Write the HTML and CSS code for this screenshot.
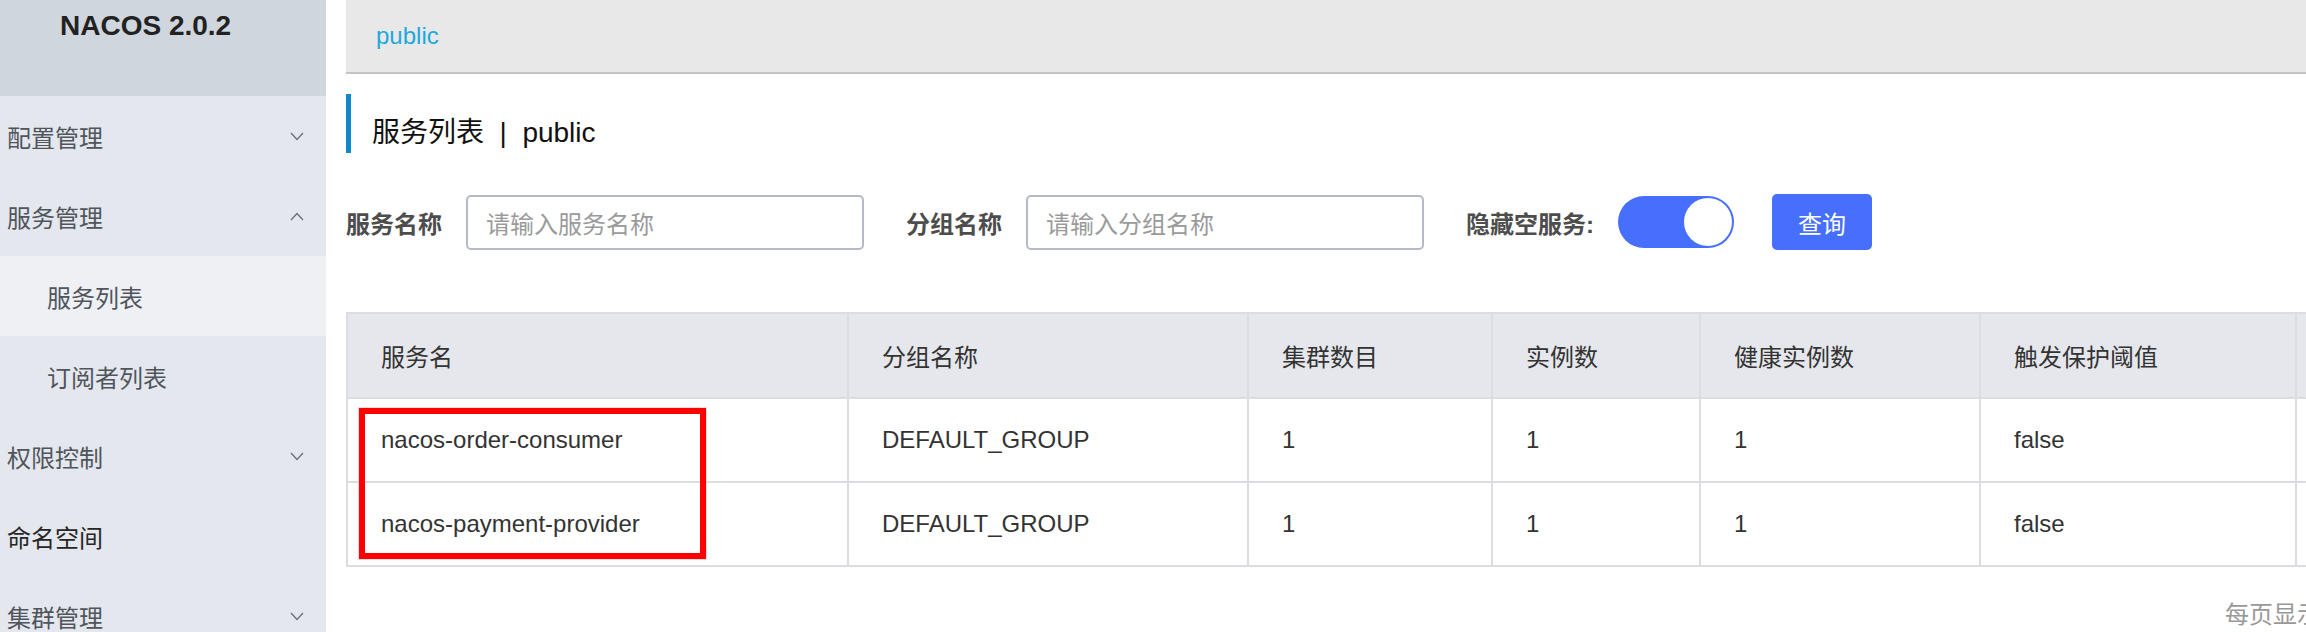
FILE: index.html
```html
<!DOCTYPE html>
<html lang="zh-CN">
<head>
<meta charset="utf-8">
<title>NACOS</title>
<link rel="stylesheet" href="styles.css">
</head>
<body>
<aside class="sidebar">
  <div class="brand">NACOS 2.0.2</div>
  <ul class="menu">
    <li class="menu-item"><span>配置管理</span><svg class="chev" width="14" height="9" viewBox="0 0 14 9"><polyline points="1,1 7,7.5 13,1" fill="none" stroke="#6b6f78" stroke-width="1.3"/></svg></li>
    <li class="menu-item"><span>服务管理</span><svg class="chev" width="14" height="9" viewBox="0 0 14 9"><polyline points="1,8 7,1.5 13,8" fill="none" stroke="#6b6f78" stroke-width="1.3"/></svg></li>
    <li class="menu-item sub active"><span>服务列表</span></li>
    <li class="menu-item sub"><span>订阅者列表</span></li>
    <li class="menu-item"><span>权限控制</span><svg class="chev" width="14" height="9" viewBox="0 0 14 9"><polyline points="1,1 7,7.5 13,1" fill="none" stroke="#6b6f78" stroke-width="1.3"/></svg></li>
    <li class="menu-item dark"><span>命名空间</span></li>
    <li class="menu-item"><span>集群管理</span><svg class="chev" width="14" height="9" viewBox="0 0 14 9"><polyline points="1,1 7,7.5 13,1" fill="none" stroke="#6b6f78" stroke-width="1.3"/></svg></li>
  </ul>
</aside>
<main class="main">
  <div class="topbar"><span class="ns-link">public</span></div>
  <h1 class="page-title">服务列表&nbsp;&nbsp;|&nbsp;&nbsp;public</h1>
  <form class="filters">
    <div class="field">
      <label class="field-label">服务名称</label>
      <div class="input"><span class="placeholder">请输入服务名称</span></div>
    </div>
    <div class="field">
      <label class="field-label">分组名称</label>
      <div class="input"><span class="placeholder">请输入分组名称</span></div>
    </div>
    <div class="field">
      <label class="field-label">隐藏空服务:</label>
      <div class="switch"><span class="knob"></span></div>
    </div>
    <button type="button" class="btn-primary">查询</button>
  </form>
  <div class="table-wrap">
    <table class="grid">
      <colgroup>
        <col class="c1"><col class="c2"><col class="c3"><col class="c4"><col class="c5"><col class="c6"><col class="c7">
      </colgroup>
      <thead>
        <tr><th>服务名</th><th>分组名称</th><th>集群数目</th><th>实例数</th><th>健康实例数</th><th>触发保护阈值</th><th></th></tr>
      </thead>
      <tbody>
        <tr><td>nacos-order-consumer</td><td>DEFAULT_GROUP</td><td>1</td><td>1</td><td>1</td><td>false</td><td></td></tr>
        <tr><td>nacos-payment-provider</td><td>DEFAULT_GROUP</td><td>1</td><td>1</td><td>1</td><td>false</td><td></td></tr>
      </tbody>
    </table>
    <div class="highlight-box"></div>
  </div>
  <div class="pagination"><span class="page-size">每页显示</span></div>
</main>
</body>
</html>
```

FILE: styles.css
```css
* { box-sizing: border-box; }
html, body {
  margin: 0;
  padding: 0;
  width: 2306px;
  height: 632px;
  overflow: hidden;
  background: #ffffff;
  font-family: "Liberation Sans", "Noto Sans CJK SC", sans-serif;
}
body {
  display: flex;
  align-items: stretch;
}

/* Sidebar */
.sidebar {
  width: 326px;
  flex: 0 0 326px;
  height: 632px;
  background: #e4e7ee;
}
.brand {
  height: 96px;
  background: #cfd6dd;
  padding-left: 60px;
  line-height: 52px;
  font-size: 28px;
  font-weight: bold;
  color: #222;
}
.menu {
  list-style: none;
  margin: 0;
  padding: 0;
}
.menu-item {
  height: 80px;
  display: flex;
  align-items: center;
  justify-content: space-between;
  padding: 0 22px 0 7px;
  font-size: 24px;
  color: #50555c;
}
.menu-item.sub { padding-left: 47px; }
.menu-item.active { background: #eef0f4; }
.menu-item.dark { color: #262626; }
.chev { display: block; }

/* Main */
.main {
  flex: 1 1 auto;
  min-width: 0;
  margin-left: 20px;
}
.topbar {
  height: 74px;
  background: #e8e8e8;
  border-bottom: 2px solid #c4c4c4;
  padding-left: 30px;
  line-height: 72px;
  font-size: 24px;
}
.ns-link { color: #1fa8dc; }

.page-title {
  margin: 20px 0 0 0;
  height: 59px;
  border-left: 5px solid #0f88cc;
  padding: 18px 0 0 21px;
  line-height: 41px;
  font-size: 28px;
  font-weight: normal;
  color: #111;
}

.filters {
  margin: 41px 0 0 0;
  display: flex;
  align-items: center;
  height: 56px;
}
.field {
  display: flex;
  align-items: center;
  gap: 24px;
  margin-right: 42px;
}
.field-label {
  font-size: 24px;
  font-weight: bold;
  color: #4d4d4d;
  white-space: nowrap;
}
.input {
  width: 398px;
  height: 55px;
  border: 2px solid #b6bac6;
  border-radius: 5px;
  padding-left: 18px;
  display: flex;
  align-items: center;
  background: #fff;
}
.placeholder {
  font-size: 24px;
  color: #9a9a9a;
}
.switch {
  width: 116px;
  height: 52px;
  border-radius: 26px;
  background: #476ffe;
  display: flex;
  align-items: center;
  justify-content: flex-end;
  padding-right: 2px;
}
.knob {
  width: 48px;
  height: 48px;
  border-radius: 50%;
  background: #fff;
}
.btn-primary {
  width: 100px;
  height: 56px;
  border: none;
  border-radius: 5px;
  background: #476ffe;
  color: #fff;
  font-family: "Liberation Sans", "Noto Sans CJK SC", sans-serif;
  font-size: 24px;
  margin-left: -4px;
  padding: 0;
}

/* Table */
.table-wrap {
  position: relative;
  margin-top: 62px;
  width: 2400px;
}
.grid {
  border-collapse: collapse;
  table-layout: fixed;
  width: 2358px;
  border: 2px solid #dcdde2;
  font-size: 24px;
  color: #333;
}
.c1 { width: 501px; }
.c2 { width: 400px; }
.c3 { width: 244px; }
.c4 { width: 208px; }
.c5 { width: 280px; }
.c6 { width: 316px; }
.c7 { width: 409px; }
.grid th, .grid td {
  border: 2px solid #dcdde2;
  text-align: left;
  padding: 0 0 0 33px;
  white-space: nowrap;
}
.grid th {
  height: 85px;
  background: #e5e7ec;
  font-weight: normal;
  color: #333;
}
.grid td {
  height: 84px;
  background: #fff;
}
.highlight-box {
  position: absolute;
  left: 13px;
  top: 96px;
  width: 347px;
  height: 151px;
  border: 6px solid #ff0000;
  box-shadow: 0 0 0 1px rgba(255, 180, 180, 0.5);
}

.pagination {
  margin-top: 28px;
  padding-left: 1879px;
  line-height: 40px;
  white-space: nowrap;
}
.page-size {
  font-size: 24px;
  color: #999;
}
```
